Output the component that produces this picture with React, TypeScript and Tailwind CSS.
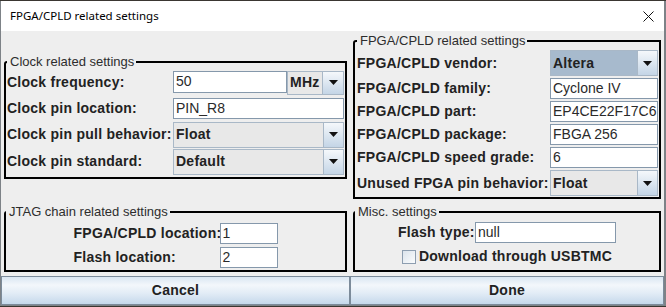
import type { ReactNode } from "react"

const font = "font-['Liberation_Sans',Arial,sans-serif]"

function Arrow() {
  return (
    <svg width="9" height="5" viewBox="0 0 9 5">
      <path d="M0 0H9L4.5 5Z" fill="#111" />
    </svg>
  )
}

function Combo({ value, focused = false, btn = 20 }: { value: string; focused?: boolean; btn?: number }) {
  return (
    <div
      className={`flex h-full w-full border border-[#a9b8c7] ${
        focused ? "bg-[#a7bacd]" : "bg-[#e8e8e8]"
      }`}
    >
      <div className="flex flex-1 items-center pl-[2px] text-[14px] font-bold tracking-[0.25px] text-[#222]">{value}</div>
      <div
        className={`flex items-center justify-center border-l border-[#a9b8c7] bg-gradient-to-b from-[#f5f8fb] to-[#c4d5e6] ${
          btn === 20 ? "w-[20px]" : "w-[21px]"
        }`}
      >
        <Arrow />
      </div>
    </div>
  )
}

function Field({ value }: { value: string }) {
  return (
    <div className="flex h-full w-full items-center overflow-hidden whitespace-nowrap border border-[#8598ab] bg-white pl-[2px] text-[14px] text-[#2a2a2a]">
      {value}
    </div>
  )
}

function Box({ title, children, className = "" }: { title: string; children: ReactNode; className?: string }) {
  return (
    <fieldset className={`rounded-tl-[3px] border-2 border-black ${className}`}>
      <legend className="ml-0 pr-[2px] pl-[3px] text-[13px] leading-[14px] text-[#2d2d2d]">{title}</legend>
      {children}
    </fieldset>
  )
}

function Row({ label, width, height, children, className = "" }: { label: string; width: string; height: string; children: ReactNode; className?: string }) {
  return (
    <div className={`flex items-center ${height} ${className}`}>
      <div className={`${width} shrink-0 text-[14px] font-bold tracking-[0.25px] whitespace-nowrap text-[#222]`}>{label}</div>
      {children}
    </div>
  )
}

export default function App() {
  return (
    <div className={`h-[307px] w-[666px] overflow-hidden bg-[#3a3631] ${font}`}>
      <div className="mt-[1px] flex h-[305px] flex-col border-r-2 border-b border-l border-[#7d8287]">
        {/* title bar */}
        <div className="flex h-[30px] shrink-0 items-center justify-between bg-white pr-[8px] pl-[9px]">
          <span className="font-['Noto_Sans',sans-serif] text-[11.5px] text-black">FPGA/CPLD related settings</span>
          <svg width="11" height="11" viewBox="0 0 11 11" className="mr-[2px]">
            <path d="M0.5 0.5L10.5 10.5M10.5 0.5L0.5 10.5" stroke="#111" strokeWidth="1" />
          </svg>
        </div>

        <div className="grid flex-1 grid-cols-[349px_314px] grid-rows-[171px_74px_29px] bg-[#eeeeee]">
          {/* clock */}
          <div className="flex items-center px-[3px]">
            <Box title="Clock related settings" className="w-full pt-[2px] pr-[1px] pb-[2px] pl-[1px]">
              <Row label="Clock frequency:" width="w-[166px]" height="h-[24px]">
                <div className="h-[22px] w-[114px] self-start">
                  <Field value="50" />
                </div>
                <div className="h-[24px] w-[57px]">
                  <Combo value="MHz" btn={21} />
                </div>
              </Row>
              <Row label="Clock pin location:" width="w-[166px]" height="h-[21px]" className="mt-[3px]">
                <div className="h-full w-[171px]">
                  <Field value="PIN_R8" />
                </div>
              </Row>
              <Row label="Clock pin pull behavior:" width="w-[166px]" height="h-[26px]" className="mt-[3px]">
                <div className="h-full w-[171px]">
                  <Combo value="Float" />
                </div>
              </Row>
              <Row label="Clock pin standard:" width="w-[166px]" height="h-[26px]" className="mt-[1px]">
                <div className="h-full w-[171px]">
                  <Combo value="Default" />
                </div>
              </Row>
            </Box>
          </div>

          {/* fpga */}
          <div className="flex items-center px-[3px]">
            <Box title="FPGA/CPLD related settings" className="w-full pt-[2px] pr-[1px] pb-[1px] pl-[2px]">
              <Row label="FPGA/CPLD vendor:" width="w-[193px]" height="h-[26px]">
                <div className="h-full w-[108px]">
                  <Combo value="Altera" focused />
                </div>
              </Row>
              {[
                ["FPGA/CPLD family:", "Cyclone IV"],
                ["FPGA/CPLD part:", "EP4CE22F17C6"],
                ["FPGA/CPLD package:", "FBGA 256"],
                ["FPGA/CPLD speed grade:", "6"],
              ].map(([l, v]) => (
                <Row key={l} label={l} width="w-[193px]" height="h-[21px]" className="mt-[2px]">
                  <div className="h-full w-[108px]">
                    <Field value={v} />
                  </div>
                </Row>
              ))}
              <Row label="Unused FPGA pin behavior:" width="w-[193px]" height="h-[26px]" className="mt-[2px]">
                <div className="h-full w-[108px]">
                  <Combo value="Float" />
                </div>
              </Row>
            </Box>
          </div>

          {/* jtag */}
          <div className="px-[3px] pt-[3px]">
            <Box title="JTAG chain related settings" className="flex flex-col items-center pt-[4px] pb-[2px]">
              <div className="flex flex-col">
                <Row label="FPGA/CPLD location:" width="w-[146px]" height="h-[21px]">
                  <div className="h-full w-[58px]">
                    <Field value="1" />
                  </div>
                </Row>
                <Row label="Flash location:" width="w-[146px]" height="h-[21px]" className="mt-[3px]">
                  <div className="h-full w-[58px]">
                    <Field value="2" />
                  </div>
                </Row>
              </div>
            </Box>
          </div>

          {/* misc */}
          <div className="px-[3px] pt-[3px]">
            <Box title="Misc. settings" className="flex flex-col items-center pt-[3px] pb-[3px]">
              <div className="flex flex-col items-center">
                <Row label="Flash type:" width="w-[77px]" height="h-[21px]">
                  <div className="h-full w-[141px]">
                    <Field value="null" />
                  </div>
                </Row>
                <div className="mt-[3px] flex h-[21px] items-center gap-[3px]">
                  <div className="h-[14px] w-[14px] border border-[#8d9eb0] bg-gradient-to-br from-[#dce4ec] to-[#fafcfd]" />
                  <span className="text-[14px] font-bold tracking-[0.25px] text-[#222]">Download through USBTMC</span>
                </div>
              </div>
            </Box>
          </div>

          {/* buttons */}
          <button className="border border-[#7c8b9a] bg-[linear-gradient(to_bottom,#dae6f2_0%,#f3f7fb_30%,#e2ecf6_60%,#c5d8eb_100%)] text-[14px] font-bold tracking-[0.25px] text-[#222]">
            Cancel
          </button>
          <button className="border border-[#7c8b9a] bg-[linear-gradient(to_bottom,#dae6f2_0%,#f3f7fb_30%,#e2ecf6_60%,#c5d8eb_100%)] text-[14px] font-bold tracking-[0.25px] text-[#222]">
            Done
          </button>
        </div>
      </div>
    </div>
  )
}
